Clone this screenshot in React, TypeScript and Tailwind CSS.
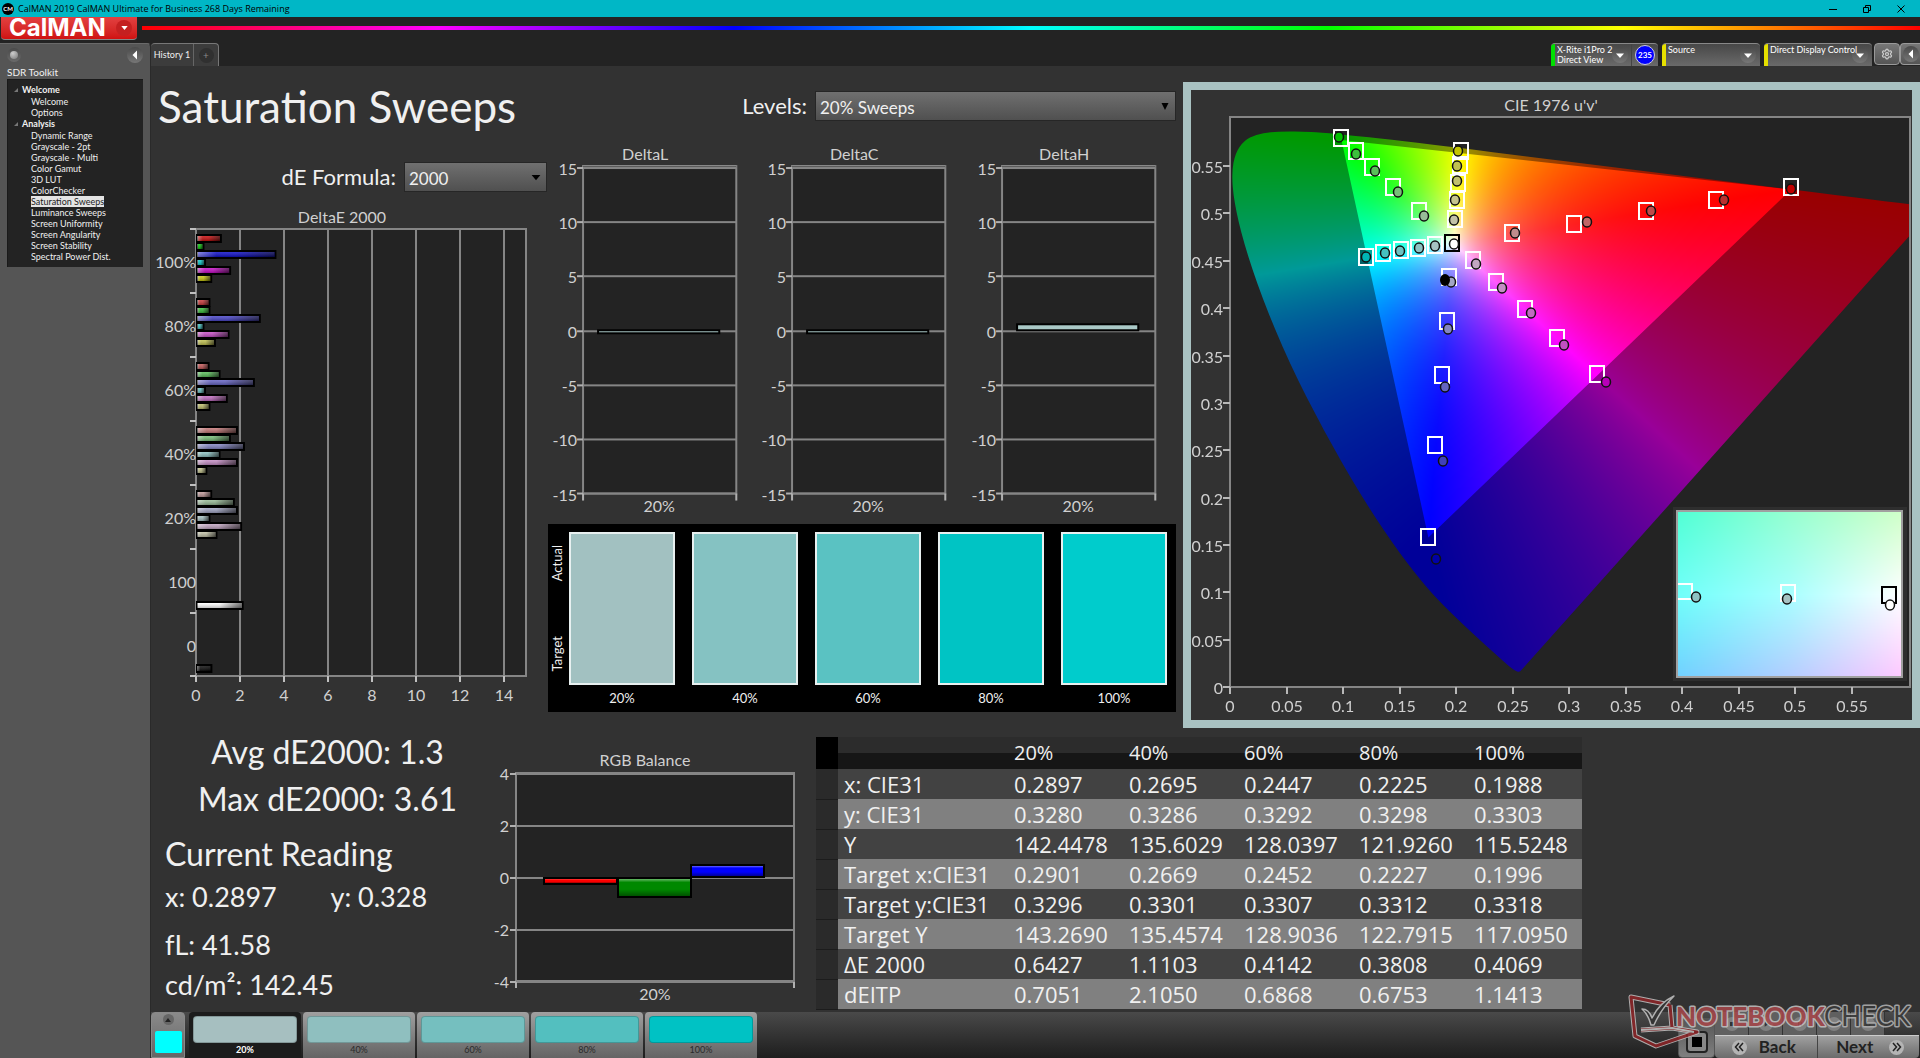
import { useEffect, useRef } from "react";
import type { ReactNode } from "react";
import { Settings } from "lucide-react";

const LATO = "font-['Lato','Open_Sans',sans-serif]";

/* ---------- data ---------- */

const TREE = [
  { name: "Welcome", items: ["Welcome", "Options"] },
  {
    name: "Analysis",
    items: [
      "Dynamic Range",
      "Grayscale - 2pt",
      "Grayscale - Multi",
      "Color Gamut",
      "3D LUT",
      "ColorChecker",
      "Saturation Sweeps",
      "Luminance Sweeps",
      "Screen Uniformity",
      "Screen Angularity",
      "Screen Stability",
      "Spectral Power Dist.",
    ],
  },
];

const LEVELS = ["20%", "40%", "60%", "80%", "100%"];

const TABLE: [string, string[]][] = [
  ["x: CIE31", ["0.2897", "0.2695", "0.2447", "0.2225", "0.1988"]],
  ["y: CIE31", ["0.3280", "0.3286", "0.3292", "0.3298", "0.3303"]],
  ["Y", ["142.4478", "135.6029", "128.0397", "121.9260", "115.5248"]],
  ["Target x:CIE31", ["0.2901", "0.2669", "0.2452", "0.2227", "0.1996"]],
  ["Target y:CIE31", ["0.3296", "0.3301", "0.3307", "0.3312", "0.3318"]],
  ["Target Y", ["143.2690", "135.4574", "128.9036", "122.7915", "117.0950"]],
  ["ΔE 2000", ["0.6427", "1.1103", "0.4142", "0.3808", "0.4069"]],
  ["dEITP", ["0.7051", "2.1050", "0.6868", "0.6753", "1.1413"]],
];

/* ΔE bars per level: red, green, blue, cyan, magenta, yellow */
const DE_GROUPS: { label: string; bars: [string, number][] }[] = [
  { label: "100%", bars: [["#c80f0f", 1.13], ["#0fc80f", 0.34], ["#0f0fc8", 3.61], ["#0fc8c8", 0.41], ["#c80fc8", 1.55], ["#c8c80f", 0.69]] },
  { label: "80%", bars: [["#c83c3c", 0.61], ["#3cc03c", 0.61], ["#4a46c8", 2.9], ["#46c4c4", 0.34], ["#c850c8", 1.48], ["#c0c050", 0.86]] },
  { label: "60%", bars: [["#c45a5a", 0.57], ["#5abe5a", 1.07], ["#6664c4", 2.63], ["#6cc2c2", 0.41], ["#c06cc0", 1.4], ["#c0c06e", 0.61]] },
  { label: "40%", bars: [["#c47878", 1.86], ["#78be78", 1.54], ["#8486c4", 2.18], ["#8ec2c2", 1.07], ["#c48ec4", 1.86], ["#c4c48e", 0.47]] },
  { label: "20%", bars: [["#c09a9a", 0.69], ["#98bc98", 1.72], ["#a2a6c4", 1.86], ["#a6c2c2", 0.61], ["#c2a6c2", 2.05], ["#c2c2a8", 0.93]] },
];

/* Chart positions of the sweep points, from 100% down to 20% saturation */
const SWEEPS: { targets: [number, number][]; readings: [number, number][]; fills: string[] }[] = [
  {
    targets: [[111, 21], [126, 34], [142, 50], [163, 70], [189, 94]],
    readings: [[109, 20], [126, 37], [145, 54], [168, 75], [194, 99]],
    fills: ["#00c000", "#3cc03c", "#5abe5a", "#78be78", "#98bc98"],
  },
  {
    targets: [[231, 34], [230, 48], [228, 66], [227, 83], [225, 102]],
    readings: [[228, 34], [227, 49], [227, 64], [225, 83], [224, 103]],
    fills: ["#c4c400", "#c0c050", "#c0c06e", "#c4c48e", "#c2c2a8"],
  },
  {
    targets: [[561, 70], [486, 83], [416, 94], [344, 107], [282, 116]],
    readings: [[561, 72], [494, 83], [421, 94], [357, 105], [285, 116]],
    fills: ["#c00000", "#b83030", "#c04a4a", "#c06666", "#c08c8c"],
  },
  {
    targets: [[136, 140], [153, 136], [171, 133], [188, 131], [205, 128]],
    readings: [[136, 140], [155, 136], [170, 134], [189, 131], [205, 129]],
    fills: ["#00b4b4", "#46c0c0", "#6cc2c2", "#8ec2c2", "#a6c2c2"],
  },
  {
    targets: [[198, 420], [205, 328], [212, 258], [217, 204], [219, 160]],
    readings: [[206, 442], [213, 344], [215, 270], [218, 212], [221, 165]],
    fills: ["#0000a8", "#4040b8", "#6464c0", "#8486c4", "#a2a6c4"],
  },
  {
    targets: [[367, 257], [327, 221], [295, 192], [266, 165], [243, 143]],
    readings: [[376, 265], [334, 228], [301, 196], [272, 171], [246, 147]],
    fills: ["#b800b8", "#c050c0", "#c06cc0", "#c48ec4", "#c2a6c2"],
  },
];

/* Spectral locus in CIE 1931 x,y */
const LOCUS: [number, number][] = [
  [0.1741, 0.005], [0.1733, 0.0048], [0.1714, 0.0051], [0.1689, 0.0069], [0.1644, 0.0109], [0.1566, 0.0177],
  [0.144, 0.0297], [0.1355, 0.0399], [0.1241, 0.0578], [0.1096, 0.0868], [0.0913, 0.1327], [0.0687, 0.2007],
  [0.0454, 0.295], [0.0235, 0.4127], [0.0082, 0.5384], [0.0039, 0.6548], [0.0139, 0.7502], [0.0389, 0.812],
  [0.0743, 0.8338], [0.1142, 0.8262], [0.1547, 0.8059], [0.1929, 0.7816], [0.2296, 0.7543], [0.3016, 0.6923],
  [0.3731, 0.6245], [0.4441, 0.5547], [0.5125, 0.4866], [0.5752, 0.4242], [0.627, 0.3725], [0.6658, 0.334],
  [0.6915, 0.3083], [0.719, 0.2809], [0.7347, 0.2653],
];
const PRIMARIES: [number, number][] = [[0.68, 0.32], [0.265, 0.69], [0.15, 0.06]];

const U_MAX = 0.6015;
const V_MAX = 0.602;

const toUv = ([x, y]: [number, number]): [number, number] => {
  const d = -2 * x + 12 * y + 3;
  return [(4 * x) / d, (9 * y) / d];
};

type Rgb = [number, number, number];

/* Fully bright colour of a chromaticity; s runs rightwards and t downwards over the plot, both 0 to 1 */
function plotColor(s: number, t: number): Rgb {
  const u = s * U_MAX;
  const v = (1 - t) * V_MAX;
  const X = (9 * u) / (4 * v);
  const Z = (12 - 3 * u - 20 * v) / (4 * v);
  const r = Math.max(0, 2.4935 * X - 0.93138 - 0.40271 * Z);
  const g = Math.max(0, -0.82949 * X + 1.76266 + 0.02362 * Z);
  const b = Math.max(0, 0.03585 * X - 0.07617 + 0.95688 * Z);
  const hi = Math.max(r, g, b, 1e-6);
  const lo = Math.min(r, g, b);
  const white = Math.pow(lo / hi, 1.6);
  const f = (c: number) => 255 * (white + ((1 - white) * (c - lo)) / Math.max(hi - lo, 1e-6));
  return [f(r), f(g), f(b)];
}

/* Colours of the magnified view at its corners, edge middles and centre */
const DETAIL: Rgb[][] = [
  [[80, 255, 212], [150, 255, 208], [208, 255, 200]],
  [[112, 255, 250], [168, 255, 255], [255, 255, 255]],
  [[112, 208, 255], [180, 205, 255], [255, 200, 255]],
];

function detailColor(s: number, t: number): Rgb {
  const i = s < 0.5 ? 0 : 1;
  const j = t < 0.5 ? 0 : 1;
  const a = s * 2 - i;
  const b = t * 2 - j;
  const mix = (k: number) =>
    (DETAIL[j][i][k] * (1 - a) + DETAIL[j][i + 1][k] * a) * (1 - b) + (DETAIL[j + 1][i][k] * (1 - a) + DETAIL[j + 1][i + 1][k] * a) * b;
  return [mix(0), mix(1), mix(2)];
}

/* ---------- chromaticity canvas ---------- */

function maskToLocus(ctx: CanvasRenderingContext2D, w: number, h: number) {
  const at = (xy: [number, number]): [number, number] => {
    const [u, v] = toUv(xy);
    return [(u / U_MAX) * w, (1 - v / V_MAX) * h];
  };
  ctx.fillStyle = "rgba(0,0,0,0.4)";
  ctx.beginPath();
  ctx.rect(0, 0, w, h);
  PRIMARIES.map(at).forEach(([x, y], i) => (i ? ctx.lineTo(x, y) : ctx.moveTo(x, y)));
  ctx.closePath();
  ctx.fill("evenodd");
  const pts = LOCUS.map(at);
  ctx.globalCompositeOperation = "destination-in";
  ctx.fillStyle = "#000";
  ctx.beginPath();
  ctx.moveTo(pts[0][0], pts[0][1]);
  for (let i = 1; i < pts.length - 1; i++) {
    const [x, y] = pts[i];
    const [nx, ny] = pts[i + 1];
    ctx.quadraticCurveTo(x, y, (x + nx) / 2, (y + ny) / 2);
  }
  ctx.lineTo(pts[pts.length - 1][0], pts[pts.length - 1][1]);
  ctx.closePath();
  ctx.fill();
  ctx.globalCompositeOperation = "source-over";
}

function ColorField({ w, h, color, locus }: { w: number; h: number; color: (s: number, t: number) => Rgb; locus?: boolean }) {
  const ref = useRef<HTMLCanvasElement>(null);
  useEffect(() => {
    const ctx = ref.current?.getContext("2d");
    if (!ctx) return;
    const img = ctx.createImageData(w, h);
    for (let j = 0; j < h; j++) {
      for (let i = 0; i < w; i++) {
        const c = color((i + 0.5) / w, (j + 0.5) / h);
        const k = 4 * (j * w + i);
        img.data[k] = c[0];
        img.data[k + 1] = c[1];
        img.data[k + 2] = c[2];
        img.data[k + 3] = 255;
      }
    }
    ctx.putImageData(img, 0, 0);
    if (locus) maskToLocus(ctx, w, h);
  }, [w, h, color, locus]);
  return <canvas ref={ref} width={w} height={h} className="block h-full w-full" />;
}

/* ---------- charts ---------- */

const GRID = "#858585";

function CieChart() {
  const px = 39;
  const py = 27;
  const pw = 680;
  const ph = 570;
  const xs = ["0", "0.05", "0.1", "0.15", "0.2", "0.25", "0.3", "0.35", "0.4", "0.45", "0.5", "0.55"];
  return (
    <svg viewBox="0 0 721 630" className={`block w-full ${LATO}`} role="img" aria-label="CIE 1976 u'v' chart">
      <text x="360" y="21" textAnchor="middle" fontSize="16" fill="#d0d0d0">
        CIE 1976 u'v'
      </text>
      <rect x={px} y={py} width={pw} height={ph} fill="#232323" />
      <foreignObject x={px} y={py} width={pw} height={ph}>
        <ColorField w={pw} h={ph} color={plotColor} locus />
      </foreignObject>
      <rect x={px} y={py} width={pw} height={ph} fill="none" stroke={GRID} strokeWidth="2" />
      {xs.map((t, i) => (
        <g key={t} fill="#d0d0d0" fontSize="16">
          <rect x={px - 1 + Math.round(i * 56.5)} y={py + ph} width="2" height="7" fill="#b8b8b8" />
          <text x={px + Math.round(i * 56.5)} y={py + ph + 25} textAnchor="middle">
            {t}
          </text>
          <rect x={px - 7} y={py + ph - 1 - Math.round(i * 47.35)} width="7" height="2" fill="#b8b8b8" />
          <text x={px - 7} y={py + ph + 7 - Math.round(i * 47.35)} textAnchor="end">
            {t}
          </text>
        </g>
      ))}
      <g transform={`translate(${px} ${py})`}>
        {SWEEPS.map((s, k) => (
          <g key={k}>
            {s.targets.map(([x, y], i) => (
              <rect key={i} x={x - 7} y={y - 8} width="14" height="16" fill={i === 0 && k === 3 ? "#00000055" : "none"} stroke="#fff" strokeWidth="2" />
            ))}
          </g>
        ))}
        {SWEEPS.map((s, k) => (
          <g key={k}>
            {s.readings.map(([x, y], i) => (
              <ellipse key={i} cx={x} cy={y} rx="4.5" ry="5" fill={s.fills[i]} stroke="#111" strokeWidth="1.5" />
            ))}
          </g>
        ))}
        <rect x="215" y="118" width="14" height="16" fill="none" stroke="#000" strokeWidth="2" />
        <ellipse cx="224" cy="127" rx="4.5" ry="5" fill="#fff" stroke="#111" strokeWidth="1.5" />
        <ellipse cx="215" cy="163" rx="5" ry="6" fill="#000" />
      </g>
      <rect x="482" y="417" width="234" height="174" fill="#2e2e2e" />
      <foreignObject x="486" y="421" width="226" height="167">
        <ColorField w={226} h={167} color={detailColor} />
      </foreignObject>
      <rect x="486" y="421" width="225" height="166" fill="none" stroke="#a0a0a0" strokeWidth="2" />
      <path d="M487 494h14v15h-14" fill="none" stroke="#fff" strokeWidth="2" />
      <rect x="590" y="495" width="14" height="16" fill="none" stroke="#fff" strokeWidth="2" />
      <rect x="691" y="497" width="14" height="16" fill="none" stroke="#000" strokeWidth="2" />
      <ellipse cx="505" cy="507" rx="4.5" ry="5" fill="#8ec2c2" stroke="#111" strokeWidth="1.5" />
      <ellipse cx="596" cy="509" rx="4.5" ry="5" fill="#a6c2c2" stroke="#111" strokeWidth="1.5" />
      <ellipse cx="699" cy="515" rx="4.5" ry="5" fill="#fff" stroke="#111" strokeWidth="1.5" />
    </svg>
  );
}

function DeltaEChart() {
  const L = 45;
  const T = 37;
  const W = 330;
  const H = 447;
  const unit = 22;
  const row = 64;
  const bar = (y: number, v: number, fill: string) => (
    <g key={y}>
      <rect x={L + 1} y={y} width={v * unit - 1} height="7" fill={fill} stroke="#000" strokeWidth="2" />
      <rect x={L + 1} y={y + 1} width={v * unit - 2} height="5" fill="url(#hshade)" />
      <rect x={L + 1} y={y + 1} width={v * unit - 2} height="5" fill="url(#vshade)" />
    </g>
  );
  const labels = ["100%", "80%", "60%", "40%", "20%", "100", "0"];
  return (
    <svg viewBox="0 0 397 520" className={`block w-full ${LATO}`} role="img" aria-label="DeltaE 2000 chart">
      <defs>
        <linearGradient id="hshade">
          <stop offset="0" stopColor="#fff" stopOpacity="0.45" />
          <stop offset="0.25" stopColor="#fff" stopOpacity="0" />
          <stop offset="0.5" stopColor="#000" stopOpacity="0" />
          <stop offset="1" stopColor="#000" stopOpacity="0.6" />
        </linearGradient>
        <linearGradient id="vshade" x2="0" y2="1">
          <stop offset="0" stopColor="#fff" stopOpacity="0.15" />
          <stop offset="1" stopColor="#000" stopOpacity="0.25" />
        </linearGradient>
      </defs>
      <text x="191" y="31" textAnchor="middle" fontSize="16" fill="#d0d0d0">
        DeltaE 2000
      </text>
      <rect x={L} y={T} width={W} height={H} fill="#232323" stroke={GRID} strokeWidth="2" />
      {[0, 2, 4, 6, 8, 10, 12, 14].map((v) => (
        <g key={v}>
          <rect x={L - 1 + v * unit} y={T} width="2" height={H} fill={GRID} />
          <rect x={L - 1 + v * unit} y={T + H} width="2" height="6" fill="#c0c0c0" />
          <text x={L + v * unit} y={T + H + 25} textAnchor="middle" fontSize="16" fill="#d0d0d0">
            {v}
          </text>
        </g>
      ))}
      {labels.map((t, i) => (
        <g key={i}>
          <rect x={L - 6} y={T - 1 + i * row} width="6" height="2" fill="#c0c0c0" />
          <text x={L} y={T + 39 + i * row} textAnchor="end" fontSize="16" fill="#d0d0d0">
            {t}
          </text>
        </g>
      ))}
      <rect x={L - 6} y={T + H - 1} width="6" height="2" fill="#c0c0c0" />
      {DE_GROUPS.map((g, i) => g.bars.map(([c, v], k) => bar(T + 6 + i * row + k * 8, v, c)))}
      {bar(410, 2.12, "#ffffff")}
      {bar(473, 0.7, "#101010")}
    </svg>
  );
}

function DeltaChart({ title, bar }: { title: string; bar: [number, number] }) {
  const L = 35;
  const W = 153;
  return (
    <svg viewBox="0 0 209 377" className={`block w-full ${LATO}`} role="img" aria-label={`${title} chart`}>
      <text x="97" y="14" textAnchor="middle" fontSize="16" fill="#d0d0d0">
        {title}
      </text>
      <rect x={L} y="20" width={W} height="327" fill="#232323" stroke={GRID} strokeWidth="2" />
      <rect x={L} y="19" width={W} height="3" fill="#5a5a5a" />
      <rect x={L} y="19" width={W} height="1" fill="#8a8a8a" />
      {[15, 10, 5, 0, -5, -10, -15].map((v, i) => {
        const y = Math.round(22 + i * 54.2);
        return (
          <g key={v}>
            <rect x={L} y={y - 1} width={W} height="2" fill={GRID} />
            <rect x={L - 6} y={y - 1} width="6" height="2" fill="#b0b0b0" />
            <text x={L - 6} y={y + 7} textAnchor="end" fontSize="16" fill="#d0d0d0">
              {v}
            </text>
          </g>
        );
      })}
      <rect x={L - 1} y="347" width="2" height="7" fill="#b0b0b0" />
      <rect x={L + W - 1} y="347" width="2" height="7" fill="#b0b0b0" />
      <text x="111" y="365" textAnchor="middle" fontSize="16" fill="#d0d0d0">
        20%
      </text>
      <rect x="50" y={bar[0]} width="121" height={bar[1]} fill="#a9c8c6" stroke="#000" strokeWidth="2" />
    </svg>
  );
}

function RgbChart() {
  const bars: [number, number, number, string][] = [
    [64, 150, 6, "#ff0000"],
    [138, 150, 19, "#008800"],
    [211, 137, 12, "#0000ff"],
  ];
  return (
    <svg viewBox="0 0 336 284" className={`block w-full ${LATO}`} role="img" aria-label="RGB Balance chart">
      <defs>
        <linearGradient id="column" x2="0" y2="1">
          <stop offset="0" stopColor="#fff" stopOpacity="0.4" />
          <stop offset="0.2" stopColor="#fff" stopOpacity="0" />
          <stop offset="0.6" stopColor="#000" stopOpacity="0" />
          <stop offset="1" stopColor="#000" stopOpacity="0.4" />
        </linearGradient>
      </defs>
      <text x="165" y="38" textAnchor="middle" fontSize="16" fill="#d0d0d0">
        RGB Balance
      </text>
      <rect x="36" y="45" width="278" height="208" fill="#232323" stroke={GRID} strokeWidth="2" />
      {[4, 2, 0, -2, -4].map((v, i) => (
        <g key={v}>
          <rect x="36" y={45 + i * 52} width="278" height="2" fill={GRID} />
          <rect x="30" y={45 + i * 52} width="6" height="2" fill="#b0b0b0" />
          <text x="29" y={52 + i * 52} textAnchor="end" fontSize="16" fill="#d0d0d0">
            {v}
          </text>
        </g>
      ))}
      <rect x="35" y="254" width="2" height="6" fill="#b0b0b0" />
      <rect x="313" y="254" width="2" height="6" fill="#b0b0b0" />
      <text x="175" y="272" textAnchor="middle" fontSize="16" fill="#d0d0d0">
        20%
      </text>
      {bars.map(([x, y, h, c]) => (
        <g key={x}>
          <rect x={x} y={y} width="73" height={h} fill={c} stroke="#000" strokeWidth="2" />
          <rect x={x + 1} y={y + 1} width="71" height={h - 2} fill="url(#column)" />
        </g>
      ))}
    </svg>
  );
}

/* ---------- pieces ---------- */

function RoundArrow({ dir = "down" }: { dir?: "down" | "left" }) {
  return (
    <span className="grid size-4 shrink-0 place-items-center rounded-full bg-linear-to-b from-[#4a4a4a] to-[#777]">
      <svg viewBox="0 0 10 10" className="size-[10px]" aria-hidden="true">
        <path d={dir === "down" ? "M1 3.5h8L5 8z" : "M7 .5v9L2.5 5z"} fill="#fff" />
      </svg>
    </span>
  );
}

function Select({ id, value, tall }: { id: string; value: string; tall?: boolean }) {
  return (
    <span className="relative block w-full">
      <select
        id={id}
        defaultValue={value}
        className="block h-[30px] w-full appearance-none rounded-none border border-[#262626] bg-linear-to-b from-[#707070] to-[#505050] px-1 pt-1 text-[17px] leading-6 text-[#f0f0f0] outline-none"
      >
        <option>{value}</option>
      </select>
      <svg viewBox="0 0 10 8" className="pointer-events-none absolute top-3 right-[6px] h-[7px] w-[10px]" aria-hidden="true">
        <path d={tall ? "M1 0h8L5 8z" : "M0 1h10L5 7z"} fill="#000" />
      </svg>
    </span>
  );
}

function DeviceTab({ strip, children, className }: { strip: string; children: ReactNode; className: string }) {
  return (
    <div className={`flex h-[23px] overflow-hidden rounded-t border-t border-[#888] bg-linear-to-b from-[#484848] to-[#6a6a6a] ${className}`}>
      <span className={`w-1 shrink-0 ${strip}`} />
      {children}
    </div>
  );
}

const tabButton = "flex min-w-0 flex-1 items-start justify-between pr-1 pl-[2px] text-left text-[9px] leading-[10px] text-white";

function Watermark() {
  const frame = "M44 13L5 5L9 44L30 54L71 40L46 36L44 13M46 36L15 38";
  return (
    <svg viewBox="0 0 290 60" className="pointer-events-none absolute right-1 bottom-[6px] h-[60px] w-[290px] opacity-85" role="img" aria-label="Notebookcheck">
      <g fill="none" strokeLinejoin="round">
        <path d={frame} stroke="#c4c4c4" strokeWidth="5" />
        <path d={frame} stroke="#8e2427" strokeWidth="3" />
        <path d="M15 38L46 36L68 40" stroke="#c4c4c4" strokeWidth="2" />
        <path d="M16 17q7 0 10 9q7 -15 22 -22q-13 13 -20 29h-3q-3 -11 -9 -16z" fill="#333" stroke="#c4c4c4" strokeWidth="1.5" />
      </g>
      <g fontFamily="Lato, sans-serif" fontSize="26" strokeLinejoin="round" paintOrder="stroke">
        <text x="50" y="34" fontWeight="900" fill="#a8474a" stroke="#c4c4c4" strokeWidth="3">
          NOTEBOOK
        </text>
        <text x="198" y="34" fill="#3a3a3a" stroke="#b4b4b4" strokeWidth="3">
          CHECK
        </text>
      </g>
    </svg>
  );
}

const transport = [
  { name: "Stop", d: "M3 3h6v6H3z" },
  { name: "Play", d: "M4 2l6 4-6 4z" },
  { name: "Step", d: "M3 3h2v6H3zM7 3h2v6H7z" },
  { name: "Loop", d: "M2 5h8v2H2z" },
  { name: "Refresh", d: "M6 2a4 4 0 1 0 4 4H8a2 2 0 1 1-2-2z" },
];

/* ---------- page ---------- */

export default function App() {
  const swatches = ["bg-[#a2c1c1]", "bg-[#85c2c2]", "bg-[#5ac2c2]", "bg-[#00c4c4]", "bg-[#00cccc]"];
  const patches = ["bg-[#a6bfc0]", "bg-[#8fbfbf]", "bg-[#75bfbf]", "bg-[#53bfbf]", "bg-[#00c2c4]"];
  return (
    <div className={`flex min-h-screen flex-col bg-[#232323] text-[#f0f0f0] ${LATO}`}>
      {/* window title */}
      <header className="flex h-[17px] items-center justify-between bg-[#00b7c6] text-black">
        <div className="flex items-center gap-1 pl-[2px]">
          <span className="grid size-3 place-items-center rounded-full bg-black text-[6px] leading-none font-bold text-white">CM</span>
          <span className="font-['Open_Sans',sans-serif] text-[9px] leading-[17px]">CalMAN 2019 CalMAN Ultimate for Business 268 Days Remaining</span>
        </div>
        <div className="flex items-center gap-6 pr-[14px]">
          {[
            ["Minimize", "M1 5.5h8"],
            ["Restore", "M1.5 3.5h5v5h-5zM3.5 3.5v-2h5v5h-2"],
            ["Close", "M1.5 1.5l7 7M8.5 1.5l-7 7"],
          ].map(([n, d]) => (
            <button key={n} type="button" aria-label={n}>
              <svg viewBox="0 0 10 10" className="size-[10px]">
                <path d={d} fill="none" stroke="#000" />
              </svg>
            </button>
          ))}
        </div>
      </header>

      {/* brand row */}
      <div className="flex h-[26px] items-start">
        <button
          type="button"
          className="ml-px flex h-[23px] w-[136px] items-center justify-between rounded-b border-b border-[#888] bg-linear-to-b from-[#e24040] to-[#d01010] pr-[5px] pl-2 text-white"
        >
          <span className="font-['Inter',sans-serif] text-[24px] leading-[22px] font-bold">CalMAN</span>
          <span className="grid size-4 place-items-center rounded-full bg-[#c42020]">
            <svg viewBox="0 0 8 5" className="h-1 w-[7px]" aria-hidden="true">
              <path d="M0 0h8L4 5z" fill="#fff" />
            </svg>
          </span>
        </button>
        <div className="mt-[9px] ml-[5px] h-1 flex-1 bg-[linear-gradient(to_right,#f00,#f0f,#00f,#0ff,#0f0,#ff0,#f00)]" />
      </div>

      <div className="flex flex-1">
        {/* workflow sidebar */}
        <aside className="w-[151px] shrink-0 rounded-tr border-t border-r border-t-[#6a6a6a] border-r-[#2a2a2a] bg-[#555] px-[7px]">
          <div className="flex h-[21px] items-center justify-between">
            <button type="button" aria-label="Record" className="grid size-[14px] place-items-center rounded-full bg-linear-to-b from-[#4a4a4a] to-[#6a6a6a]">
              <span className="size-2 rounded-full bg-[radial-gradient(circle_at_35%_30%,#ccc,#777)]" />
            </button>
            <button type="button" aria-label="Collapse">
              <RoundArrow dir="left" />
            </button>
          </div>
          <h2 className="text-[10px] leading-[14px]">SDR Toolkit</h2>
          <nav className="h-[188px] border-t border-l border-[#1a1a1a] bg-[#232323] pt-1 text-[9px]">
            {TREE.map((g) => (
              <div key={g.name}>
                <div className="flex h-3 items-center gap-1 pl-[6px] leading-3 font-bold">
                  <svg viewBox="0 0 4 4" className="size-1" aria-hidden="true">
                    <path d="M4 0v4H0z" fill="#777" />
                  </svg>
                  {g.name}
                </div>
                <ul>
                  {g.items.map((t) => (
                    <li key={t} className="flex pl-[23px]">
                      <a href="#" className={`h-[11px] leading-[11px] whitespace-nowrap ${t === "Saturation Sweeps" ? "bg-[#e4e4e4] text-[#222]" : ""}`}>
                        {t}
                      </a>
                    </li>
                  ))}
                </ul>
              </div>
            ))}
          </nav>
        </aside>

        <div className="flex min-w-0 flex-1 flex-col">
          {/* tab bar */}
          <div className="flex h-[23px] items-start justify-between">
            <div className="flex h-[23px] rounded-t border-t border-r border-[#777] bg-[#3c3c3c]">
              <button type="button" className="w-[43px] border-r border-[#666] text-[9px] whitespace-nowrap">
                History 1
              </button>
              <button type="button" aria-label="Add tab" className="grid w-6 place-items-center">
                <span className="grid size-[15px] place-items-center rounded-full bg-[#303030] text-[10px] leading-none text-[#888]">+</span>
              </button>
            </div>
            <div className="flex items-start">
              <DeviceTab strip="bg-[#00e000]" className="w-[107px]">
                <button type="button" className={tabButton}>
                  <span className="pt-px whitespace-nowrap">
                    X-Rite i1Pro 2<br />
                    Direct View
                  </span>
                  <span className="pt-[3px] pr-1">
                    <RoundArrow />
                  </span>
                </button>
                <span className="flex w-[27px] shrink-0 items-center justify-center border-l border-[#444]">
                  <span className="grid size-5 place-items-center rounded-full border border-[#ccd] bg-[#0000ff] text-[8px] font-bold text-white">235</span>
                </span>
              </DeviceTab>
              <DeviceTab strip="bg-[#e6e000]" className="ml-1 w-[98px]">
                <button type="button" className={tabButton}>
                  <span className="pt-px">Source</span>
                  <span className="pt-[3px]">
                    <RoundArrow />
                  </span>
                </button>
              </DeviceTab>
              <DeviceTab strip="bg-[#e6e000]" className="ml-1 w-[108px]">
                <button type="button" className={tabButton}>
                  <span className="z-10 pt-px whitespace-nowrap">Direct Display Control</span>
                  <span className="-ml-3 pt-[3px]">
                    <RoundArrow />
                  </span>
                </button>
              </DeviceTab>
              <button type="button" aria-label="Settings" className="ml-[2px] grid h-[22px] w-[26px] place-items-center rounded border border-[#999] bg-linear-to-b from-[#777] to-[#555]">
                <Settings className="size-3 text-[#ccc]" strokeWidth={2.5} />
              </button>
              <button type="button" aria-label="Collapse panel" className="grid h-[22px] w-5 place-items-center rounded-l border border-r-0 border-[#999] bg-linear-to-b from-[#777] to-[#555]">
                <RoundArrow dir="left" />
              </button>
            </div>
          </div>

          <main className="flex-1 bg-[#323232]">
            <div className="grid grid-cols-[1032fr_737fr]">
              <section className="pr-[7px]">
                <div className="flex h-20 items-center justify-between pl-[7px]">
                  <h1 className="text-[44px] leading-none">Saturation Sweeps</h1>
                  <div className="flex items-center gap-2">
                    <label htmlFor="levels" className="text-[22px] leading-[30px]">
                      Levels:
                    </label>
                    <div className="w-[361px]">
                      <Select id="levels" value="20% Sweeps" tall />
                    </div>
                  </div>
                </div>
                <div className="grid grid-cols-[397fr_628fr]">
                  <div>
                    <div className="flex items-center justify-end gap-2 pt-4 pr-px">
                      <label htmlFor="formula" className="text-[22px] leading-[30px]">
                        dE Formula:
                      </label>
                      <div className="w-[143px]">
                        <Select id="formula" value="2000" />
                      </div>
                    </div>
                    <DeltaEChart />
                  </div>
                  <div>
                    <div className="grid grid-cols-3">
                      <DeltaChart title="DeltaL" bar={[184, 3]} />
                      <DeltaChart title="DeltaC" bar={[184, 3]} />
                      <DeltaChart title="DeltaH" bar={[178, 6]} />
                    </div>
                    <div className="flex bg-black pt-2 pr-[9px] text-[13px]">
                      <div className="flex h-[153px] w-[21px] flex-col justify-between py-[13px]">
                        <span className="rotate-180 pl-[2px] leading-[18px] [writing-mode:vertical-rl]">Actual</span>
                        <span className="rotate-180 pl-[2px] leading-[18px] [writing-mode:vertical-rl]">Target</span>
                      </div>
                      <div className="grid flex-1 grid-cols-5 gap-[17px]">
                        {LEVELS.map((l, i) => (
                          <div key={l} className="text-center leading-[27px]">
                            <div className={`h-[153px] border-2 border-[#e8f0f0] ${swatches[i]}`} />
                            {l}
                          </div>
                        ))}
                      </div>
                    </div>
                  </div>
                </div>
              </section>

              <section className="mt-4 self-start border-8 border-[#a9c2c2]">
                <CieChart />
              </section>
            </div>

            <div className="grid grid-cols-[329fr_336fr_766fr_338fr]">
              <section className="whitespace-nowrap">
                <div className="pl-6 text-center text-[32px] leading-[47px]">
                  <p>Avg dE2000: 1.3</p>
                  <p>Max dE2000: 3.61</p>
                </div>
                <h2 className="mt-2 pl-[14px] text-[32px] leading-[47px]">Current Reading</h2>
                <div className="pl-[14px] text-[27px] leading-10">
                  <p className="grid grid-cols-2">
                    <span>x: 0.2897</span>
                    <span className="pl-2">y: 0.328</span>
                  </p>
                  <p className="mt-2">fL: 41.58</p>
                  <p>cd/m²: 142.45</p>
                </div>
              </section>
              <RgbChart />
              <div className="pt-[9px]">
                <table className="w-full table-fixed border-collapse text-left font-['Open_Sans',sans-serif] text-[22px] leading-[30px]">
                  <colgroup>
                    <col className="w-[22px]" />
                    <col className="w-[169px]" />
                    <col span={5} />
                  </colgroup>
                  <thead>
                    <tr className="h-8 bg-[linear-gradient(#2c2c2c_0_50%,#161616_50%_100%)] text-[20px]">
                      <td className="bg-black" />
                      <td />
                      {LEVELS.map((l) => (
                        <th key={l} scope="col" className="p-0 pl-[7px] font-normal">
                          {l}
                        </th>
                      ))}
                    </tr>
                  </thead>
                  <tbody>
                    {TABLE.map(([name, vals]) => (
                      <tr key={name} className="h-[30px] odd:bg-[#424242] even:bg-[#808080]">
                        <td className="border-b border-[#1c1c1c] bg-[#2a2a2a] p-0" />
                        <th scope="row" className="p-0 pl-[6px] font-normal whitespace-nowrap">
                          {name}
                        </th>
                        {vals.map((v, i) => (
                          <td key={i} className="p-0 pl-[7px]">
                            {v}
                          </td>
                        ))}
                      </tr>
                    ))}
                  </tbody>
                </table>
              </div>
            </div>
          </main>

          {/* pattern bar */}
          <footer className="relative flex h-[46px] items-stretch justify-between bg-linear-to-b from-[#4a4a4a] to-[#1e1e1e]">
            <div className="flex text-[9px]">
              <button type="button" aria-label="Pattern colour" className="mr-1 flex w-[34px] flex-col items-center justify-between rounded-t border border-[#888] bg-linear-to-b from-[#8a8a8a] to-[#666] pt-px pb-1">
                <span className="grid size-[11px] place-items-center rounded-full bg-[#666]">
                  <svg viewBox="0 0 6 4" className="h-1 w-[6px]" aria-hidden="true">
                    <path d="M3 0l3 4H0z" fill="#222" />
                  </svg>
                </span>
                <span className="h-[22px] w-[27px] rounded-xs bg-[#00ffff]" />
              </button>
              <div className="flex gap-[2px]">
                {LEVELS.map((l, i) => (
                  <button
                    key={l}
                    type="button"
                    className={`flex w-[112px] flex-col rounded-t px-1 pt-1 text-center ${i === 0 ? "bg-[#1c1c1c] font-bold text-white" : "bg-linear-to-b from-[#a0a0a0] to-[#646464] text-[#2a2a2a]"}`}
                  >
                    <span className={`block h-[27px] w-full rounded-sm border border-[#00000033] ${patches[i]}`} />
                    <span className="block w-full leading-[14px]">{l}</span>
                  </button>
                ))}
              </div>
            </div>

            <div className="flex items-end pr-px text-[#222]">
              <button type="button" aria-label="Pattern window" className="flex h-10 w-[37px] items-end justify-center rounded border border-[#555] bg-linear-to-b from-[#555] to-[#808080] pb-1">
                <span className="grid size-[22px] place-items-center rounded border-2 border-[#222] bg-[#888]">
                  <span className="size-[10px] bg-black" />
                </span>
              </button>
              <div className="w-[204px]">
                <div className="flex h-[23px] pr-[34px]">
                  {transport.map((t) => (
                    <button key={t.name} type="button" aria-label={t.name} className="grid flex-1 place-items-center border-r border-[#333] bg-[#606060]">
                      <span className="grid size-[14px] place-items-center rounded-full bg-[#808080]">
                        <svg viewBox="0 0 12 12" className="size-2">
                          <path d={t.d} fill="#333" />
                        </svg>
                      </span>
                    </button>
                  ))}
                </div>
                <div className="flex h-[23px] text-[17px] leading-[22px] font-bold">
                  <button type="button" className="flex flex-1 items-center justify-center gap-3 rounded-bl border-t border-r border-t-[#ccc] border-r-[#444] bg-linear-to-b from-[#a0a0a0] to-[#6c6c6c] pr-1">
                    <span className="grid size-[15px] place-items-center rounded-full bg-[#b4b4b4]">
                      <svg viewBox="0 0 10 10" className="size-[10px]" aria-hidden="true">
                        <path d="M5 1L1.5 5L5 9M9 1L5.5 5L9 9" fill="none" stroke="#222" strokeWidth="1.5" />
                      </svg>
                    </span>
                    Back
                  </button>
                  <button type="button" className="flex flex-1 items-center justify-center gap-4 rounded-br border-t border-t-[#ccc] bg-linear-to-b from-[#a0a0a0] to-[#6c6c6c] pl-1">
                    Next
                    <span className="grid size-[15px] place-items-center rounded-full bg-[#b4b4b4]">
                      <svg viewBox="0 0 10 10" className="size-[10px]" aria-hidden="true">
                        <path d="M1 1L4.5 5L1 9M5 1L8.5 5L5 9" fill="none" stroke="#222" strokeWidth="1.5" />
                      </svg>
                    </span>
                  </button>
                </div>
              </div>
            </div>
            <Watermark />
          </footer>
        </div>
      </div>
    </div>
  );
}
